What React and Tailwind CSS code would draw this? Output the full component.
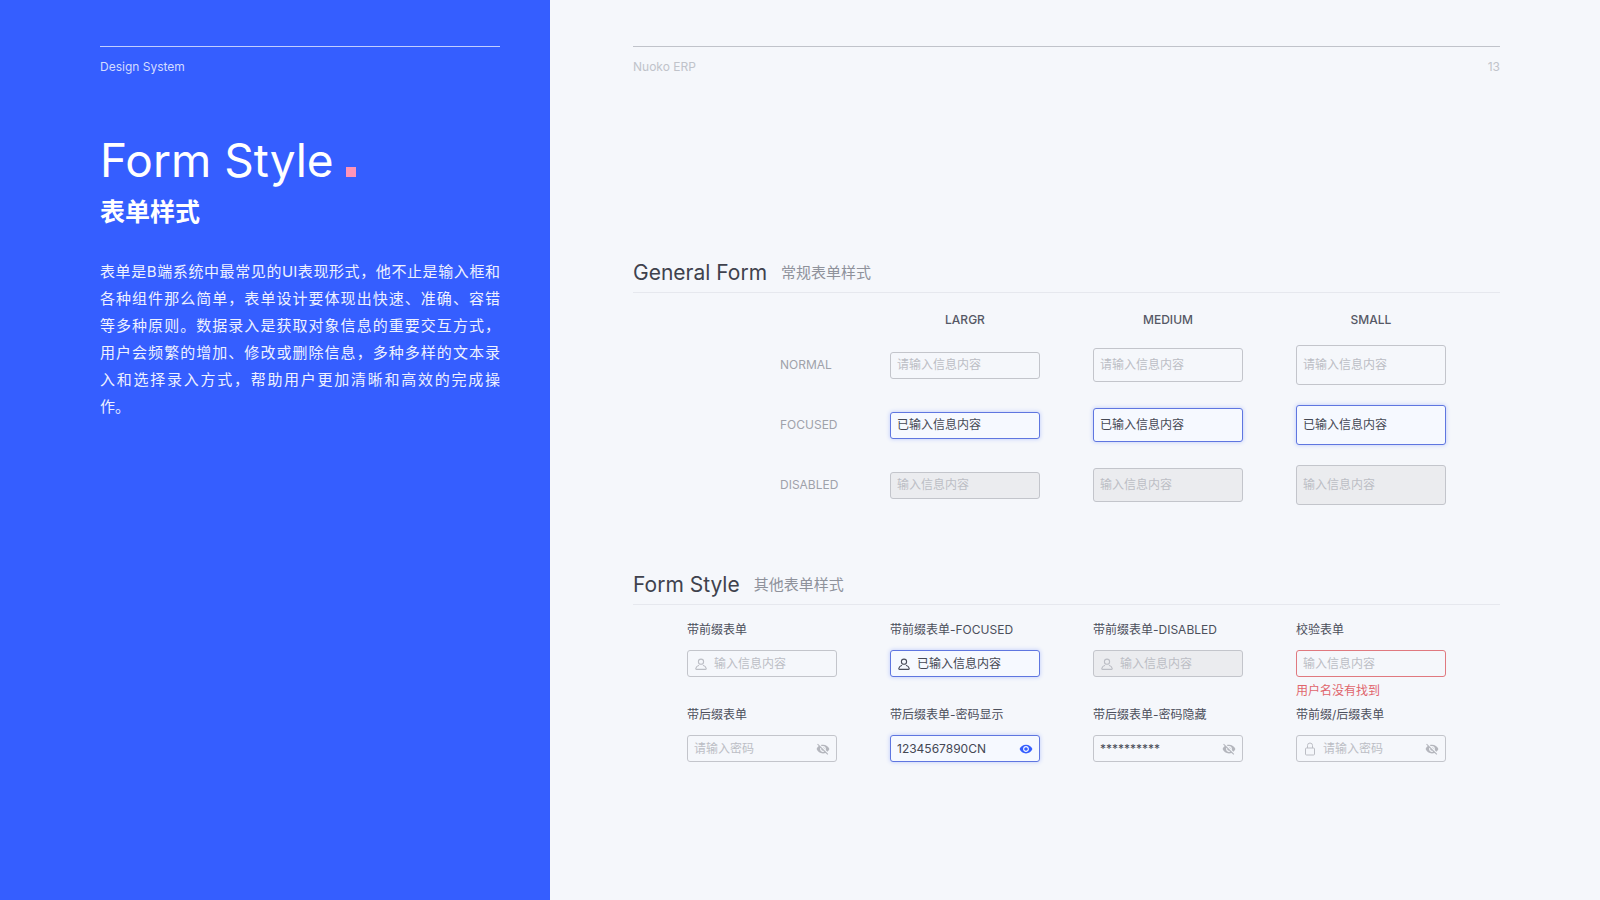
import React, { useState } from 'react';
import { MdVisibility, MdVisibilityOff } from 'react-icons/md';

const INTRO = [
  '表单是B端系统中最常见的UI表现形式，他不止是输入框和',
  '各种组件那么简单，表单设计要体现出快速、准确、容错',
  '等多种原则。数据录入是获取对象信息的重要交互方式，',
  '用户会频繁的增加、修改或删除信息，多种多样的文本录',
  '入和选择录入方式，帮助用户更加清晰和高效的完成操',
  '作。',
];

const SIZES = [
  { name: 'LARGR', height: 'h-[27px]' },
  { name: 'MEDIUM', height: 'h-[34px]' },
  { name: 'SMALL', height: 'h-10' },
];

const STATES = [
  { name: 'NORMAL', state: 'normal', placeholder: '请输入信息内容' },
  { name: 'FOCUSED', state: 'focused', value: '已输入信息内容' },
  { name: 'DISABLED', state: 'disabled', placeholder: '输入信息内容' },
];

const FIELDS = [
  { id: 'prefix', label: '带前缀表单', prefix: 'user', placeholder: '输入信息内容' },
  { id: 'prefix-focused', label: '带前缀表单-FOCUSED', state: 'focused', prefix: 'user', value: '已输入信息内容' },
  { id: 'prefix-disabled', label: '带前缀表单-DISABLED', state: 'disabled', prefix: 'user', placeholder: '输入信息内容' },
  { id: 'check', label: '校验表单', state: 'error', placeholder: '输入信息内容', error: '用户名没有找到' },
  { id: 'suffix', label: '带后缀表单', suffix: 'hidden', placeholder: '请输入密码' },
  { id: 'suffix-shown', label: '带后缀表单-密码显示', state: 'focused', suffix: 'shown', value: '1234567890CN' },
  { id: 'suffix-hidden', label: '带后缀表单-密码隐藏', suffix: 'hidden', value: '**********' },
  { id: 'both', label: '带前缀/后缀表单', prefix: 'lock', suffix: 'hidden', placeholder: '请输入密码' },
];

const BOX = {
  normal: 'border-[#c3c5cb]',
  focused: 'border-[#5f76e0] bg-[#f6f9ff] shadow-[0_0_4px_rgba(53,94,255,0.3)]',
  disabled: 'border-[#c3c5cb] bg-[#ebecef]',
  error: 'border-[#e0797f]',
};

function UserIcon() {
  return (
    <svg viewBox="0 0 12 12" className="h-3 w-3" fill="none" stroke="currentColor" strokeWidth="1.1" strokeLinejoin="round">
      <circle cx="6" cy="3.7" r="2.6" />
      <path d="M4 7.300C2.300 7.900 1.100 9 .800 10.400c-.1.600.2 1 .8 1h8.800c.6 0 .9-.4.8-1C10.900 9 9.700 7.900 8 7.300" />
    </svg>
  );
}

function LockIcon() {
  return (
    <svg viewBox="0 0 12 14" className="h-3.5 w-3" fill="none" stroke="currentColor" strokeWidth="1">
      <rect x="1.5" y="6" width="9" height="7" rx="1" />
      <path d="M3.5 6V3.5a2.5 2.5 0 0 1 5 0V6" />
    </svg>
  );
}

function Field({ id, label, state = 'normal', height = 'h-[27px]', prefix, suffix, value, placeholder }) {
  const [text, setText] = useState(value || '');
  const iconColor = state === 'focused' ? 'text-[#4a4d5a]' : 'text-[#bcbec5]';
  return (
    <div className={`flex w-full items-center rounded-[3px] border px-1.5 ${height} ${BOX[state]}`}>
      {prefix && (
        <span className={`mr-1.5 flex w-3.5 shrink-0 justify-center ${iconColor}`}>
          {prefix === 'user' ? <UserIcon /> : <LockIcon />}
        </span>
      )}
      <input
        id={id} type="text" aria-label={label} value={text} onChange={e => setText(e.target.value)}
        placeholder={placeholder} disabled={state === 'disabled'}
        className="h-5 min-w-0 flex-1 bg-transparent text-xs leading-5 text-[#454854] outline-none placeholder:text-[#bcbec5]"
      />
      {suffix && (
        <button
          type="button" aria-label={suffix === 'shown' ? '隐藏密码' : '显示密码'}
          className={`shrink-0 ${suffix === 'shown' ? 'text-[#355eff]' : 'text-[#b4b6bd]'}`}
        >
          {suffix === 'shown' ? <MdVisibility size={14} /> : <MdVisibilityOff size={14} />}
        </button>
      )}
    </div>
  );
}

function SectionTitle({ title, subtitle }) {
  return (
    <div className="flex h-10 items-center gap-3.5 border-b border-[#e6e8ee]">
      <h2 className="text-[21px] leading-7 text-[#3f424d]">{title}</h2>
      <span className="text-[15px] leading-6 text-[#8f929b]">{subtitle}</span>
    </div>
  );
}

function Intro() {
  return (
    <aside className="w-[550px] shrink-0 bg-[#355eff] pr-[50px] pl-[100px] text-white">
      <div className="mt-[46px] border-t border-[#c2cfff] pt-2.5 text-xs leading-5 text-[#d3dcff]">Design System</div>
      <h1 className="mt-[51px] flex items-baseline gap-3 text-[46px] leading-[64px] font-normal">
        Form Style
        <span className="h-2.5 w-2.5 bg-[#ff94b8]" />
      </h1>
      <p className="mt-0.5 text-[25px] leading-9 font-bold">表单样式</p>
      <p className="mt-7 text-[15px] leading-[27px] text-[#eef1ff]">
        {INTRO.map((line, i) => (
          <span key={line} className={`block ${i < INTRO.length - 1 ? '[text-align-last:justify]' : ''}`}>{line}</span>
        ))}
      </p>
    </aside>
  );
}

function SizeTable() {
  return (
    <div className="px-px">
      <table className="w-full table-fixed border-separate border-spacing-x-[53px] border-spacing-y-0">
        <thead>
          <tr className="h-[42px] text-xs text-[#555865]">
            <td />
            {SIZES.map(s => <th key={s.name} scope="col" className="pt-[11px] font-medium">{s.name}</th>)}
          </tr>
        </thead>
        <tbody>
          {STATES.map(row => (
            <tr key={row.name} className="h-[60px]">
              <th scope="row" className="pl-[93px] text-left text-xs font-normal whitespace-nowrap text-[#9fa2aa]">{row.name}</th>
              {SIZES.map(s => (
                <td key={s.name}>
                  <Field
                    label={`${row.name} ${s.name}`} state={row.state} height={s.height}
                    value={row.value} placeholder={row.placeholder}
                  />
                </td>
              ))}
            </tr>
          ))}
        </tbody>
      </table>
    </div>
  );
}

function App() {
  return (
    <div className="flex min-h-screen bg-[#f5f7fb] font-[Inter,'Noto_Sans_CJK_SC',sans-serif]">
      <Intro />
      <main className="flex-1 pr-[100px] pl-[83px]">
        <div className="mt-[46px] flex justify-between border-t border-[#c0c3ca] pt-2.5 text-xs leading-5 text-[#c0c3ca]">
          <span>Nuoko ERP</span>
          <span>13</span>
        </div>

        <section className="mt-44">
          <SectionTitle title="General Form" subtitle="常规表单样式" />
          <SizeTable />
        </section>

        <section className="mt-[50px]">
          <SectionTitle title="Form Style" subtitle="其他表单样式" />
          <div className="grid grid-cols-4 gap-x-[53px] px-[54px] pt-[15px]">
            {FIELDS.map(({ error, ...field }) => (
              <div key={field.id} className="h-[85px]">
                <label htmlFor={field.id} className="mb-2.5 block text-xs leading-5 whitespace-nowrap text-[#4c4f5c]">{field.label}</label>
                <Field {...field} />
                {error && <p className="mt-1 text-xs leading-5 text-[#e0656c]">{error}</p>}
              </div>
            ))}
          </div>
        </section>
      </main>
    </div>
  );
}

export default App;
